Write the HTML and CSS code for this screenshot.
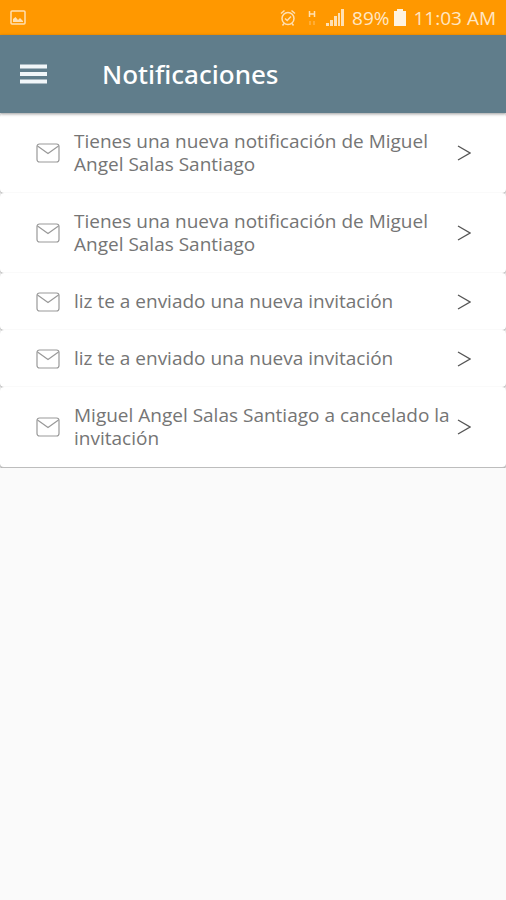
FILE: index.html
```html
<!DOCTYPE html>
<html lang="es">
<head>
  <meta charset="UTF-8">
  <meta name="viewport" content="width=device-width, initial-scale=1">
  <title>Notificaciones</title>
  <link rel="stylesheet" href="styles.css">
</head>
<body>
  <svg class="sprite" aria-hidden="true">
    <symbol id="mail" viewBox="0 0 24 20">
      <rect x="1" y="1" width="22" height="18" rx="2.5"/>
      <path d="M1.5 3 12 10.5 22.5 3"/>
    </symbol>
    <symbol id="arrow" viewBox="0 0 14 18">
      <path d="M1 2 13 9 1 16"/>
    </symbol>
  </svg>

  <div class="status-bar">
    <svg class="picture-icon" viewBox="0 0 16 15" aria-hidden="true">
      <rect x="1" y="1" width="14" height="13" rx="1"/>
      <path class="solid" d="M3 12V9l2.5-2 2.5 3 2-2 3 3v1z"/>
    </svg>
    <div class="status-right">
      <svg class="alarm-icon" viewBox="0 0 16 18" aria-hidden="true">
        <circle cx="8" cy="9.5" r="6"/>
        <path d="M1 4.5 4.5 1.5M15 4.5 11.5 1.5M5 9.5l2.2 2L11 7.5M4 14.5 2.5 16.5M12 14.5l1.5 2"/>
      </svg>
      <svg class="data-icon" viewBox="0 0 8 16" aria-hidden="true">
        <path d="M1.5 1v6M6.5 1v6M1.5 4h5"/>
        <path class="faded" d="M2 11v4M6 11v4"/>
      </svg>
      <svg class="signal-icon" viewBox="0 0 18 17" aria-hidden="true">
        <path d="M0 14h3v3H0zM4 11h3v6H4zM8 7h3v10H8zM12 4h2v13h-2zM15 0h3v17h-3z"/>
      </svg>
      <span class="battery">89%</span>
      <svg class="battery-icon" viewBox="0 0 12 17" aria-hidden="true">
        <path d="M3 0h6v2h3v15H0V2h3z"/>
      </svg>
      <span class="clock">11:03 AM</span>
    </div>
  </div>

  <header class="toolbar">
    <button class="menu-button" type="button" aria-label="Menú">
      <svg viewBox="0 0 27 20" aria-hidden="true">
        <path d="M0 2.5h27M0 10h27M0 17.5h27"/>
      </svg>
    </button>
    <h1>Notificaciones</h1>
  </header>

  <main class="list">
    <a class="card" href="#">
      <svg class="mail"><use href="#mail"/></svg>
      <span class="text">Tienes una nueva notificación de Miguel Angel Salas Santiago</span>
      <svg class="arrow"><use href="#arrow"/></svg>
    </a>
    <a class="card" href="#">
      <svg class="mail"><use href="#mail"/></svg>
      <span class="text">Tienes una nueva notificación de Miguel Angel Salas Santiago</span>
      <svg class="arrow"><use href="#arrow"/></svg>
    </a>
    <a class="card" href="#">
      <svg class="mail"><use href="#mail"/></svg>
      <span class="text">liz te a enviado una nueva invitación</span>
      <svg class="arrow"><use href="#arrow"/></svg>
    </a>
    <a class="card" href="#">
      <svg class="mail"><use href="#mail"/></svg>
      <span class="text">liz te a enviado una nueva invitación</span>
      <svg class="arrow"><use href="#arrow"/></svg>
    </a>
    <a class="card" href="#">
      <svg class="mail"><use href="#mail"/></svg>
      <span class="text">Miguel Angel Salas Santiago a cancelado la invitación</span>
      <svg class="arrow"><use href="#arrow"/></svg>
    </a>
  </main>
</body>
</html>
```
FILE: styles.css
```css
body {
  margin: 0;
  background-color: #fafafa;
  font-family: "Choco Cooky", "Open Sans", sans-serif;
}
svg {
  display: block;
  flex: none;
  fill: none;
}
.sprite {
  width: 0;
  height: 0;
  position: absolute;
}
.status-bar {
  display: flex;
  justify-content: space-between;
  align-items: center;
  height: 35px;
  padding: 0 10px;
  background-color: #ff9800;
  color: #ffe7c4;
  font-size: 19px;
}
.status-right {
  display: flex;
  align-items: center;
}
.status-bar svg {
  stroke: #ffe0b2;
  stroke-width: 1.5;
}
.status-bar .solid {
  fill: #ffe0b2;
  stroke: none;
}
.status-bar .faded {
  opacity: 0.4;
}
.picture-icon {
  width: 16px;
  height: 15px;
}
.alarm-icon {
  width: 16px;
  height: 18px;
  margin-right: 12px;
}
.data-icon {
  width: 8px;
  height: 16px;
  margin-right: 10px;
}
.status-bar .signal-icon {
  width: 18px;
  height: 17px;
  margin-right: 8px;
  fill: #ffe0b2;
  stroke: none;
}
.status-bar .battery-icon {
  width: 12px;
  height: 17px;
  margin: 0 8px 0 4px;
  fill: #fff3e0;
  stroke: none;
}
.toolbar {
  position: relative;
  display: flex;
  align-items: center;
  height: 78px;
  padding: 0 20px;
  background-color: #607d8b;
  box-shadow: 0 1px 3px rgba(0, 0, 0, 0.4);
}
.menu-button {
  padding: 0;
  border: none;
  background: none;
  cursor: pointer;
}
.menu-button svg {
  width: 27px;
  height: 20px;
  stroke: #f1f6f9;
  stroke-width: 4;
}
h1 {
  margin: 0 0 0 55px;
  color: #fff;
  font-family: "Choco Cooky", "Noto Sans", sans-serif;
  font-size: 26px;
  font-weight: 500;
}
.card {
  display: flex;
  align-items: center;
  padding: 17px 35px 17px 36px;
  border-radius: 4px;
  background-color: #fff;
  box-shadow: 0 1px 2px rgba(0, 0, 0, 0.4);
  color: #757575;
  font-size: 19px;
  line-height: 23px;
  text-decoration: none;
}
.card:last-child {
  border-bottom: 1px solid #bdbdbd;
}
.mail {
  width: 24px;
  height: 20px;
  margin-right: 14px;
  stroke: #999;
  stroke-width: 1.2;
}
.text {
  flex: 1;
}
.arrow {
  width: 14px;
  height: 18px;
  stroke: #555;
  stroke-width: 1.3;
}
```
